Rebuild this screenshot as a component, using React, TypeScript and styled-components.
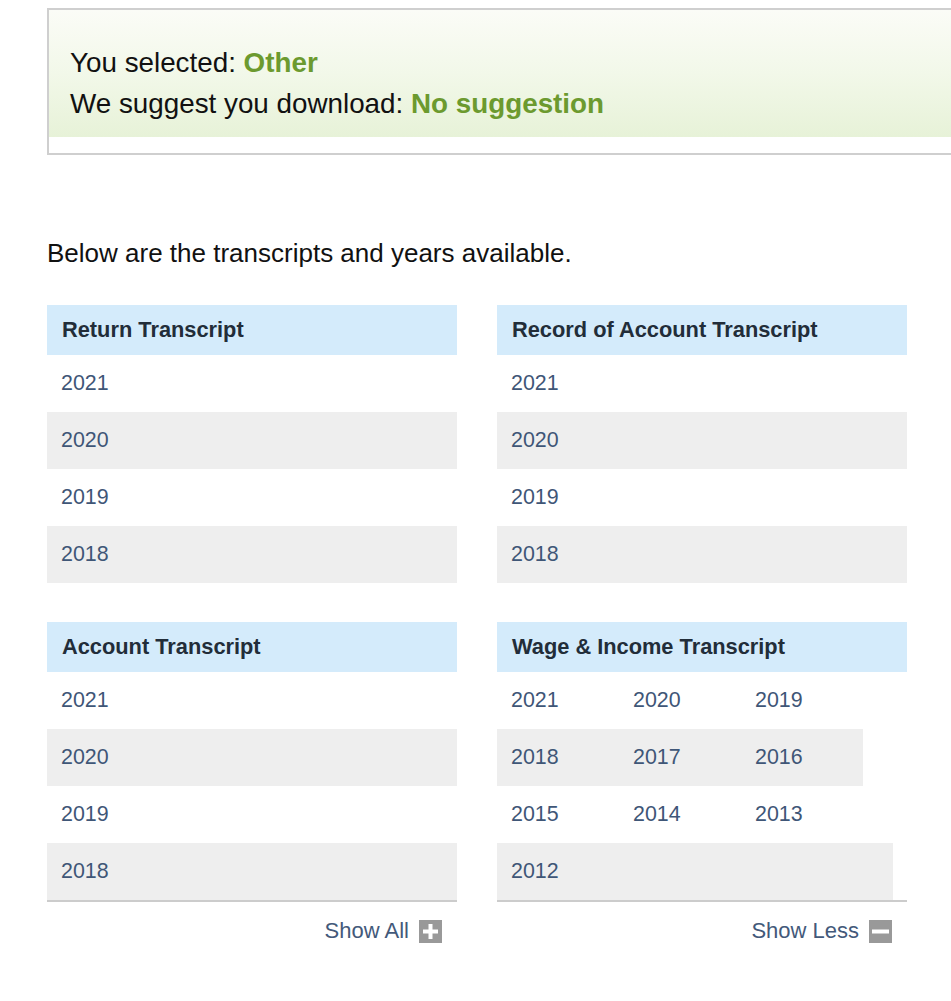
import React from 'react'
import styled, { createGlobalStyle } from 'styled-components'

const GlobalStyle = createGlobalStyle`
  html, body {
    margin: 0;
    padding: 0;
    background: #fff;
    overflow-x: hidden;
  }
  body {
    font-family: 'Liberation Sans', Arial, Helvetica, sans-serif;
    color: #111;
  }
`

const Page = styled.div`
  padding: 8px 0 40px 47px;
`

const SelectionBox = styled.div`
  border: 2px solid #cfcfcf;
  border-right: none;
  margin-right: -40px;
  padding-bottom: 16px;
`

const SelectionInner = styled.div`
  background: linear-gradient(to bottom, #fbfcf7 0%, #f2f8e9 50%, #e7f2d8 100%);
  padding: 32px 21px 13px;
  font-size: 27.8px;
  line-height: 41px;
  color: #111;
`

const Highlight = styled.span`
  color: #6c9a2f;
  font-weight: bold;
`

const Intro = styled.p`
  margin: 83px 0 37px;
  font-size: 26px;
  line-height: 30px;
  color: #111;
`

const Grid = styled.div`
  display: grid;
  grid-template-columns: 410px 410px;
  column-gap: 40px;
  row-gap: 39px;
`

const Panel = styled.section`
  display: flex;
  flex-direction: column;
`

const PanelHeader = styled.h3`
  margin: 0;
  height: 50px;
  display: flex;
  align-items: center;
  padding-left: 15px;
  background: #d4ebfb;
  font-size: 21.8px;
  font-weight: bold;
  color: #222d39;
`

const YearList = styled.div<{ $bordered?: boolean }>`
  display: flex;
  flex-direction: column;
  border-bottom: ${(p) => (p.$bordered ? '2px solid #cccccc' : 'none')};
`

const YearRow = styled.div<{ $shaded?: boolean; $width?: number }>`
  display: flex;
  align-items: center;
  height: 57px;
  width: ${(p) => (p.$width ? `${p.$width}px` : 'auto')};
  background: ${(p) => (p.$shaded ? '#eeeeee' : 'transparent')};
`

const Year = styled.a`
  width: 122px;
  padding-left: 14px;
  box-sizing: border-box;
  font-size: 21.4px;
  color: #3f5677;
  text-decoration: none;
  cursor: pointer;
`

const Toggle = styled.div`
  display: flex;
  justify-content: flex-end;
  align-items: center;
  gap: 10px;
  height: 58px;
  padding-right: 15px;
  font-size: 22px;
  color: #43597a;
  cursor: pointer;
`

const ToggleIcon = styled.span`
  width: 23px;
  height: 23px;
  background: #999999;
  display: flex;
  align-items: center;
  justify-content: center;
`

const PlusIcon = () => (
  <svg width="15" height="15" viewBox="0 0 15 15">
    <rect x="5.5" y="0" width="4" height="15" fill="#fff" />
    <rect x="0" y="5.5" width="15" height="4" fill="#fff" />
  </svg>
)

const MinusIcon = () => (
  <svg width="17" height="15" viewBox="0 0 17 15">
    <rect x="0" y="5.5" width="17" height="4" fill="#fff" />
  </svg>
)

const simpleYears = ['2021', '2020', '2019', '2018']

const SimplePanel = ({ title, footer }: { title: string; footer?: React.ReactNode }) => (
  <Panel>
    <PanelHeader>{title}</PanelHeader>
    <YearList $bordered={!!footer}>
      {simpleYears.map((y, i) => (
        <YearRow key={y} $shaded={i % 2 === 1}>
          <Year>{y}</Year>
        </YearRow>
      ))}
    </YearList>
    {footer}
  </Panel>
)

const wageRows: { years: string[]; width?: number }[] = [
  { years: ['2021', '2020', '2019'] },
  { years: ['2018', '2017', '2016'], width: 366 },
  { years: ['2015', '2014', '2013'] },
  { years: ['2012'], width: 396 },
]

export default function App() {
  return (
    <>
      <GlobalStyle />
      <Page>
        <SelectionBox>
          <SelectionInner>
            <div>
              You selected: <Highlight>Other</Highlight>
            </div>
            <div>
              We suggest you download: <Highlight>No suggestion</Highlight>
            </div>
          </SelectionInner>
        </SelectionBox>

        <Intro>Below are the transcripts and years available.</Intro>

        <Grid>
          <SimplePanel title="Return Transcript" />
          <SimplePanel title="Record of Account Transcript" />
          <SimplePanel
            title="Account Transcript"
            footer={
              <Toggle>
                Show All
                <ToggleIcon>
                  <PlusIcon />
                </ToggleIcon>
              </Toggle>
            }
          />
          <Panel>
            <PanelHeader>Wage &amp; Income Transcript</PanelHeader>
            <YearList $bordered>
              {wageRows.map((row, i) => (
                <YearRow key={i} $shaded={i % 2 === 1} $width={row.width}>
                  {row.years.map((y) => (
                    <Year key={y}>{y}</Year>
                  ))}
                </YearRow>
              ))}
            </YearList>
            <Toggle>
              Show Less
              <ToggleIcon>
                <MinusIcon />
              </ToggleIcon>
            </Toggle>
          </Panel>
        </Grid>
      </Page>
    </>
  )
}
